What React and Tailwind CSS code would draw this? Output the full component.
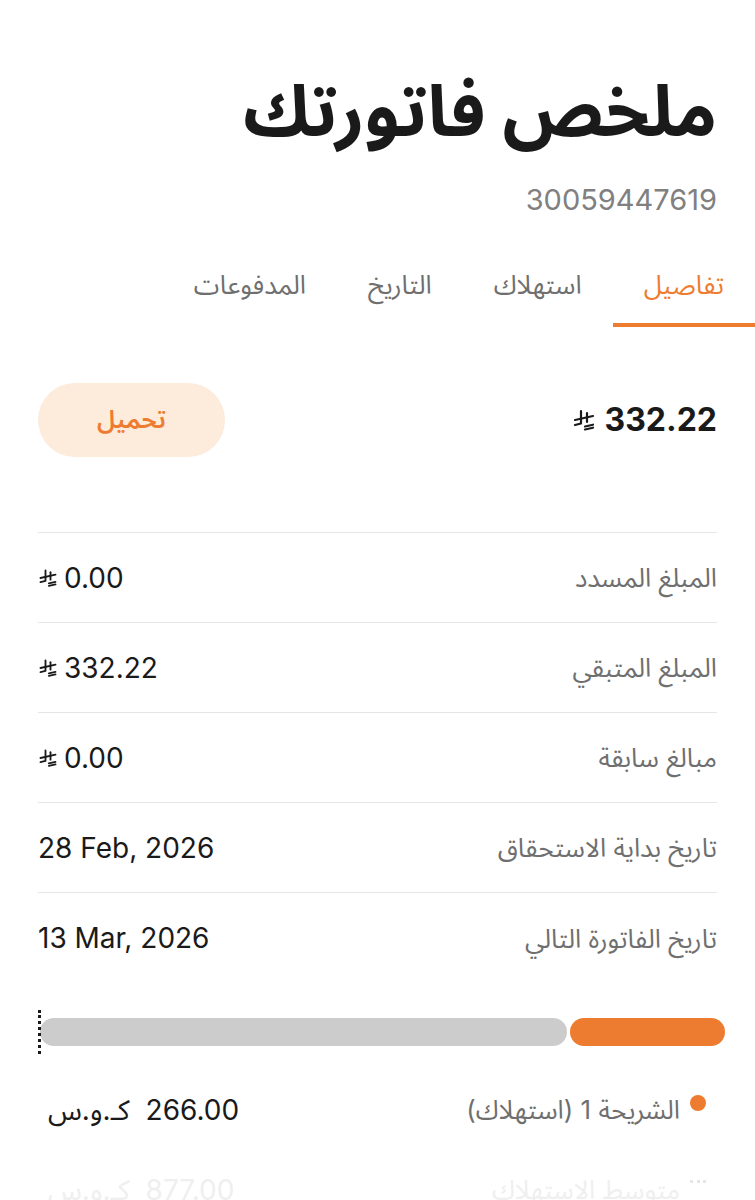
import React from "react";

const FONT = { fontFamily: '"Inter", "Noto Sans Arabic", "DejaVu Sans", sans-serif' };

function Riyal({ className }) {
  return (
    <svg viewBox="0 0 24 24" className={className} fill="none" stroke="currentColor" strokeWidth="2.2" strokeLinecap="round" strokeLinejoin="round">
      <path d="M9 3v12.5L3 17" />
      <path d="M15 5v9" />
      <path d="M3 12l18-4" />
      <path d="M13 18.5l8-1.8" />
      <path d="M13 21.5l8-1.8" />
    </svg>
  );
}

const rows = [
  { label: "المبلغ المسدد", value: "0.00", riyal: true },
  { label: "المبلغ المتبقي", value: "332.22", riyal: true },
  { label: "مبالغ سابقة", value: "0.00", riyal: true },
  { label: "تاريخ بداية الاستحقاق", value: "28 Feb, 2026" },
  { label: "تاريخ الفاتورة التالي", value: "13 Mar, 2026" },
];

const tabs = ["تفاصيل", "استهلاك", "التاريخ", "المدفوعات"];

export default function App() {
  return (
    <div dir="rtl" className="w-[755px] h-[1200px] overflow-hidden bg-white" style={FONT}>
      <div className="px-[38px] pt-[66px]">
        <h1 className="text-[71px] font-bold leading-[88px] text-[#1a1a1a]">ملخص فاتورتك</h1>
        <div className="mt-[28px] text-[29px] leading-[36px] text-[#808080]">30059447619</div>
      </div>

      <div className="mt-[49px] flex">
        {tabs.map((t, i) => (
          <div key={t} className="flex flex-col items-stretch">
            <div className={"px-[31px] text-[26px] leading-[36px] pb-[20px] " + (i === 0 ? "text-[#ee7c30]" : "text-[#6f6f6f]")}>{t}</div>
            <div className={"h-[4px] " + (i === 0 ? "bg-[#ee7c30]" : "bg-transparent")} />
          </div>
        ))}
      </div>

      <div className="px-[38px]">
        <div className="mt-[56px] flex items-center justify-between">
          <div dir="ltr" className="flex items-center gap-[9px] text-[#1a1a1a]">
            <Riyal className="w-[24px] h-[24px]" />
            <span className="text-[32px] font-bold leading-[40px]">332.22</span>
          </div>
          <button className="w-[187px] h-[74px] rounded-full bg-[#fdebdc] text-[#ee7c30] text-[25px] font-semibold">تحميل</button>
        </div>

        <div className="mt-[75px] border-t border-[#e6e6e6]">
          {rows.map((r, i) => (
            <div key={r.label} className={"h-[90px] flex items-center justify-between " + (i < rows.length - 1 ? "border-b border-[#e6e6e6]" : "")}>
              <span className="text-[26px] text-[#6f6f6f]">{r.label}</span>
              <div dir="ltr" className="flex items-center gap-[6px] text-[#1a1a1a]">
                {r.riyal && <Riyal className="w-[20px] h-[20px]" />}
                <span className="text-[28px] leading-[36px]">{r.value}</span>
              </div>
            </div>
          ))}
        </div>

        <div className="mt-[35px] relative flex gap-[3px] h-[28px]" dir="ltr">
          <div className="absolute left-0 top-[-8px] h-[44px] border-l-[3px] border-dotted border-[#1a1a1a]" />
          <div className="flex-1 ml-[2px] rounded-full bg-[#cccccc]" />
          <div className="w-[155px] mr-[-8px] rounded-full bg-[#ee7c30]" />
        </div>

        <div className="mt-[46px] flex items-start justify-between">
          <div className="flex items-start gap-[10px] pr-[11px]">
            <span className="mt-[3px] w-[16px] h-[16px] rounded-full bg-[#ee7c30] inline-block" />
            <span className="text-[26px] leading-[36px] text-[#6f6f6f]">الشريحة 1 (استهلاك)</span>
          </div>
          <div dir="ltr" className="pl-[10px] flex items-center gap-[16px] text-[28px] leading-[36px] text-[#1a1a1a]">
            <span>كـ.و.س</span>
            <span>266.00</span>
          </div>
        </div>

        <div className="mt-[44px] flex items-start justify-between">
          <div className="flex items-start gap-[10px] pr-[11px]">
            <span className="mt-[8px] w-[16px] h-[12px] border-t-[3px] border-dotted border-[#e6e6e6] inline-block" />
            <span className="text-[26px] leading-[36px] text-[#efefef]">متوسط الاستهلاك</span>
          </div>
          <div dir="ltr" className="pl-[10px] flex items-center gap-[16px] text-[28px] leading-[36px] text-[#efefef]">
            <span>كـ.و.س</span>
            <span>877.00</span>
          </div>
        </div>
      </div>
    </div>
  );
}
